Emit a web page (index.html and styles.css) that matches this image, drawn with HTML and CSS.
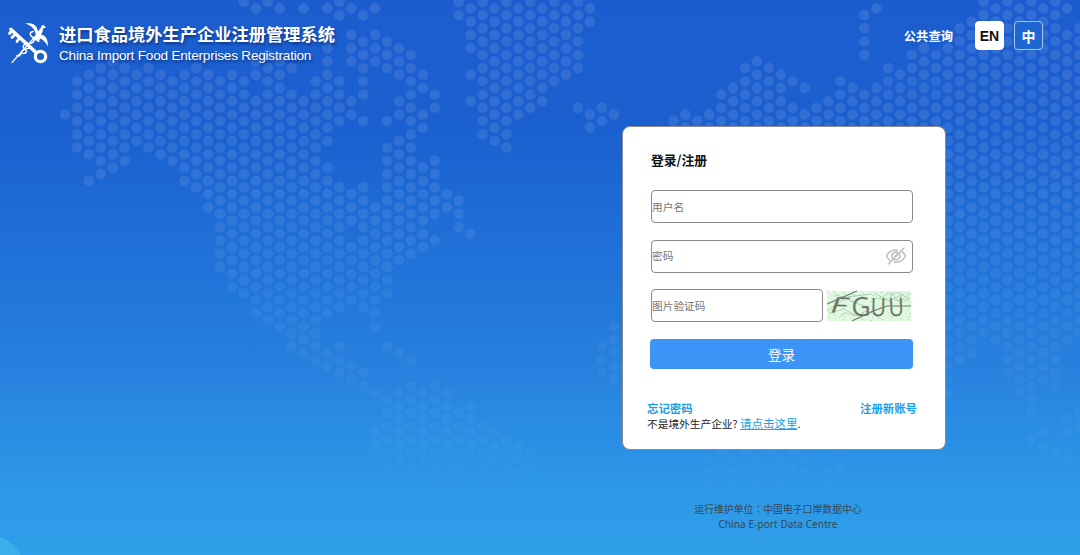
FILE: index.html
```html
<!DOCTYPE html>
<html lang="zh-CN">
<head>
<meta charset="utf-8">
<title>进口食品境外生产企业注册管理系统</title>
<link rel="stylesheet" href="styles.css">
</head>
<body>
<svg class="backdrop" viewBox="0 0 1080 555" aria-hidden="true">
  <defs>
    <linearGradient id="fade" x1="0" y1="0" x2="0" y2="1">
      <stop offset="0" stop-color="#fff"/>
      <stop offset=".35" stop-color="#ddd"/>
      <stop offset=".6" stop-color="#777"/>
      <stop offset=".8" stop-color="#484848"/>
      <stop offset=".92" stop-color="#000"/>
    </linearGradient>
    <mask id="fadeMask" maskUnits="userSpaceOnUse" x="0" y="0" width="1080" height="555"><rect width="1080" height="555" fill="url(#fade)"/></mask>
  </defs>
  <g mask="url(#fadeMask)"><g id="dots" class="dots"></g></g>
  <circle class="corner" cx="-15" cy="575" r="41"/>
</svg>
<div class="page">
  <header class="header">
    <svg class="logo" viewBox="0 0 42 42" aria-hidden="true">
      <g fill="none" stroke="#fff" stroke-linecap="round">
        <path d="M4 7 29 30" stroke-width="3.6"/>
        <circle cx="33.500" cy="34" r="5.200" stroke-width="3.300"/>
        <path d="M5 8 2.500 11M8 12l-3 3M12 16l-2 3" stroke-width="2.800"/>
        <path d="M5 40 30 12" stroke-width="1.200"/>
        <path d="M26 9c-5 1-2 5 0 6s2 5-3 6M20 20c-4 2-5 5-2 7s1 4-2 4M24 24c-3 4-8 1-9 5s-3 5-5 4" stroke-width="1.400"/>
      </g>
      <path d="M18 1c7-1 12 1 13 8l3-4c0-2 2-3 3-2l2 2-3 1c0 3-1 4-2 6 5 1 7 5 7 12-2-4-5-7-8-8l-1 4-3-2-4-1 4-4c-1-6-4-10-11-12z" fill="#fff"/>
    </svg>
    <div class="brand">
      <div class="brand-cn">进口食品境外生产企业注册管理系统</div>
      <div class="brand-en">China Import Food Enterprises Registration</div>
    </div>
    <nav class="nav">
      <a class="query">公共查询</a>
      <button class="lang lang-en">EN</button>
      <button class="lang lang-cn">中</button>
    </nav>
  </header>
  <main class="main">
    <form class="card">
      <h1 class="card-title">登录/注册</h1>
      <div class="field"><span>用户名</span></div>
      <div class="field">
        <span>密码</span>
        <svg class="eye" viewBox="0 0 22 18" aria-hidden="true">
          <g fill="none" stroke="#bfbfbf" stroke-width="1.6" stroke-linecap="round">
            <path d="M12.500 3.200C7 2.400 3.500 5 1.500 9c.8 1.700 1.900 3.100 3.300 4.100M9 15c5.500 1 9.500-2 11.500-6-.8-1.700-1.800-3-3.100-4"/>
            <path d="M13 6A3.800 3.800 0 0 0 7.600 11.200M9.500 12.500A3.800 3.800 0 0 0 14.500 7.500M10 9.500 12.500 7M19 1 3.500 17"/>
          </g>
        </svg>
      </div>
      <div class="captcha-row">
        <div class="field captcha-field"><span>图片验证码</span></div>
        <svg class="captcha" viewBox="0 0 84 30">
          <rect width="84" height="30" fill="#dff8df"/>
          <g id="specks"></g>
          <g fill="none" stroke-width=".5">
            <path d="M0 20 20 6 44 3M8 3l35 15" stroke="#70a080"/>
            <path d="M12 27c7-12 15 3 22-4s13 1 18 4M45 9c7-6 13 4 19-4s12 1 19 3" stroke="#86bba5"/>
            <path d="M47 2l15 8 15-7M62 4c8 9 13 7 20-2" stroke="#76b5ad"/>
            <path d="M56 6q8-8 12 0t14 2M2 22l15-4 11 6" stroke="#92a99b"/>
          </g>
          <path d="M25 30 46 20 60 15H84M0 13 30 0" fill="none" stroke="#6d7b6d" stroke-width="1.200"/>
          <g class="captcha-text">
            <text transform="translate(1.500 21.500) rotate(2) skewX(-18) scale(1.050 .7)">F</text>
            <text transform="translate(25 25.500) rotate(-3) scale(.84 .84)">G</text>
            <text transform="translate(43.500 25) rotate(1) scale(.68 .82)">U</text>
            <text transform="translate(62 25.500) rotate(-3) scale(.68 .82)">U</text>
          </g>
        </svg>
      </div>
      <button class="submit" type="button">登录</button>
      <div class="links"><a>忘记密码</a><a>注册新账号</a></div>
      <p class="hint">不是境外生产企业? <a>请点击这里</a>.</p>
    </form>
    <footer class="footer">
      <div class="footer-cn">运行维护单位<span class="colon" lang="zh-TW">：</span>中国电子口岸数据中心</div>
      <div class="footer-en">China E-port Data Centre</div>
    </footer>
  </main>
</div>
<script src="map.js"></script>
</body>
</html>
```

FILE: styles.css
```css
* { box-sizing: border-box; }
body {
  margin: 0;
  height: 555px;
  overflow: hidden;
  font-family: "Liberation Sans", "Noto Sans CJK SC", sans-serif;
  background: linear-gradient(180deg, #1b5dcf 0, #1b60d0 130px, #1e6ad4 200px, #2176da 290px, #2781de 370px, #2a8de4 430px, #2d99e7 495px, #2f9fe9 555px);
}
.backdrop { position: absolute; inset: 0; width: 1080px; height: 555px; }
.dots { fill: #fff; fill-opacity: .1; }
.corner { fill: #3aaeeb; }
.page { position: relative; display: flex; flex-direction: column; height: 555px; }
.header { display: flex; height: 126px; padding: 21px 37px 0 7px; align-items: flex-start; }
.logo { width: 42px; height: 43px; margin-top: 1px; }
.brand { margin-left: 10px; color: #fff; white-space: nowrap; text-shadow: 1px 2px 3px rgba(0, 20, 80, .6); }
.brand-cn { font: bold 17.25px/26px "Noto Sans CJK SC", sans-serif; }
.brand-en { font-size: 13.600px; line-height: 17px; letter-spacing: -.22px; }
.nav { display: flex; margin-left: auto; align-items: center; }
.query { margin-right: 22px; color: #fff; font: bold 12.300px/20px "Noto Sans CJK SC", sans-serif; }
.lang { width: 29px; height: 29px; padding: 0; border-radius: 4px; border: 1px solid #fff; font: bold 14px "Liberation Sans", "Noto Sans CJK SC", sans-serif; text-align: center; }
.lang-en { background: #fff; color: #111; }
.lang-cn { margin-left: 10px; background: #1e67d3; color: #fff; border-color: #a9c6ef; }
.main { width: 324px; margin-left: 622px; }
.card { width: 324px; height: 324px; padding: 22px 28px 0; border: 1px solid #8a8a8a; border-radius: 8px; background: #fff; }
.card-title { margin: 0 0 19px; font: bold 12.800px/22px "Noto Sans CJK SC", sans-serif; color: #111; }
.field { display: flex; align-items: center; justify-content: space-between; width: 262px; height: 33px; margin-bottom: 16.500px; padding: 0 5px 0 0; border: 1px solid #8b8b8b; border-radius: 4px; color: #757575; font: 10.700px/16px "Noto Sans CJK SC", sans-serif; }
.eye { width: 22px; height: 18px; }
.captcha-row { display: flex; align-items: flex-start; gap: 4px; }
.captcha-field { width: 172px; margin-bottom: 16px; }
.captcha { width: 84px; height: 30px; margin-top: 2px; overflow: visible; }
.captcha-text { font: 31px "Open Sans", sans-serif; fill: #697669; }
.submit { display: block; width: 263px; height: 30px; margin: 1px 0 0 -1px; padding: 0; border: 0; border-radius: 4px; background: #3c94f7; color: #fff; font: 13.500px/30px "Noto Sans CJK SC", sans-serif; }
.links { display: flex; justify-content: space-between; margin: 31px 0 0 -4px; font: bold 11.400px/16px "Noto Sans CJK SC", sans-serif; color: #18a0ea; }
.hint { margin: -1px 0 0 -4px; color: #222; font: 10.700px/16px "Noto Sans CJK SC", sans-serif; }
.hint a { color: #18a0ea; font-size: 11.500px; text-decoration: underline; }
.footer { width: 312px; margin-top: 52px; text-align: center; color: #34495c; }
.footer-cn { font: 9.850px/15px "Noto Sans CJK SC", sans-serif; }
.colon { font-family: "Noto Sans CJK TC", sans-serif; }
.footer-en { font: 10px/15px "Noto Sans", sans-serif; letter-spacing: .1px; }
```

FILE: map.js
```js
// Each entry is one column of the dotted map: "column: first-last" in half-row steps.
const columns = `0:17|1:12-22|2:11-23,27|3:10-26|4:9-25|5:10-24|6:11-21|7:10-22|8:11-23|9:12-24
10:11-27|11:10-28|12:11-31|13:12-40|14:11-43|15:0,12-44|16:1,9-11,15-47|17:0,8-48|18:1,9-13,15-49
19:10,14-52|20:1,15-53|21:12-54|22:1,5-21,25-47,53-55|23:0-2,12-18,28-46,52-56
24:1,5-9,15-17,29-33,37-45,55-57|25:2,6-14,18,28-46,56-58|26:1,5-9,31-49,59,65-67
27:6-10,18,22-44,52,60-70|28:7-11,15-17,21-39,53,59-71|29:8-20,22-38,54,58-72
30:11-13,17-19,25-37,59-73|31:14-16,24-32,36,58-74|32:29-31,59-73|33:0-2,30-34,62-74
34:1-7,11,15,35,61-75|35:0-20,64-74|36:1-21,65-75|37:0-22,66-74|38:1-17,67-73|39:0-16,68-70
40:1-15|41:0-12|42:1-11|43:0-10,16|44:1-3,17-19|45:16-18,52-56|46:17,49-57
51:18|52:17-19|53:18|54:17-19,67-75|55:14-18,68-74|56:13-19,67-75|57:10-18,68-74|58:9-19,67-75
59:10-18,68-74|60:11-19,67-75|61:12,16-18,68-74|62:13,17-19,67-71|63:16-18|64:15-19,71-73|65:12-18,70-74
66:13-19|67:2-8,14-18|68:1,13-19|69:10-18|70:11-19|71:8-18|72:7-19|73:8-18|74:5-59|75:4-54|76:3-53
77:0-50|78:1-51|79:0-56|80:1-59|81:0-62,66|82:1-57,65-67|83:0-58,68|84:1,5-51,63-65,69|85:4-50,62-64`;

const svgNs = "http://www.w3.org/2000/svg";
function circle(parent, x, y, r, fill) {
  const dot = document.createElementNS(svgNs, "circle");
  dot.setAttribute("cx", x);
  dot.setAttribute("cy", y);
  dot.setAttribute("r", r);
  if (fill) dot.setAttribute("fill", fill);
  parent.appendChild(dot);
}

const dots = document.getElementById("dots");
columns.split(/[|\n]/).forEach(entry => {
  const [column, runs] = entry.split(":");
  runs.split(",").forEach(run => {
    const [first, last = first] = run.split("-").map(Number);
    for (let h = first; h <= last; h += 2) {
      circle(dots, 65 + 11.93 * column, 1.75 + 6.627 * h, 5.3);
    }
  });
});

// Noise specks on the verification image.
const specks = document.getElementById("specks");
const tones = ["#547a60", "#77bb9a", "#5a9aa8", "#8a8cb0"];
for (let i = 0; i < 90; i++) {
  circle(specks, (i * 37.3) % 84, (i * 17.9) % 30, 0.45, tones[i % 4]);
}
```
